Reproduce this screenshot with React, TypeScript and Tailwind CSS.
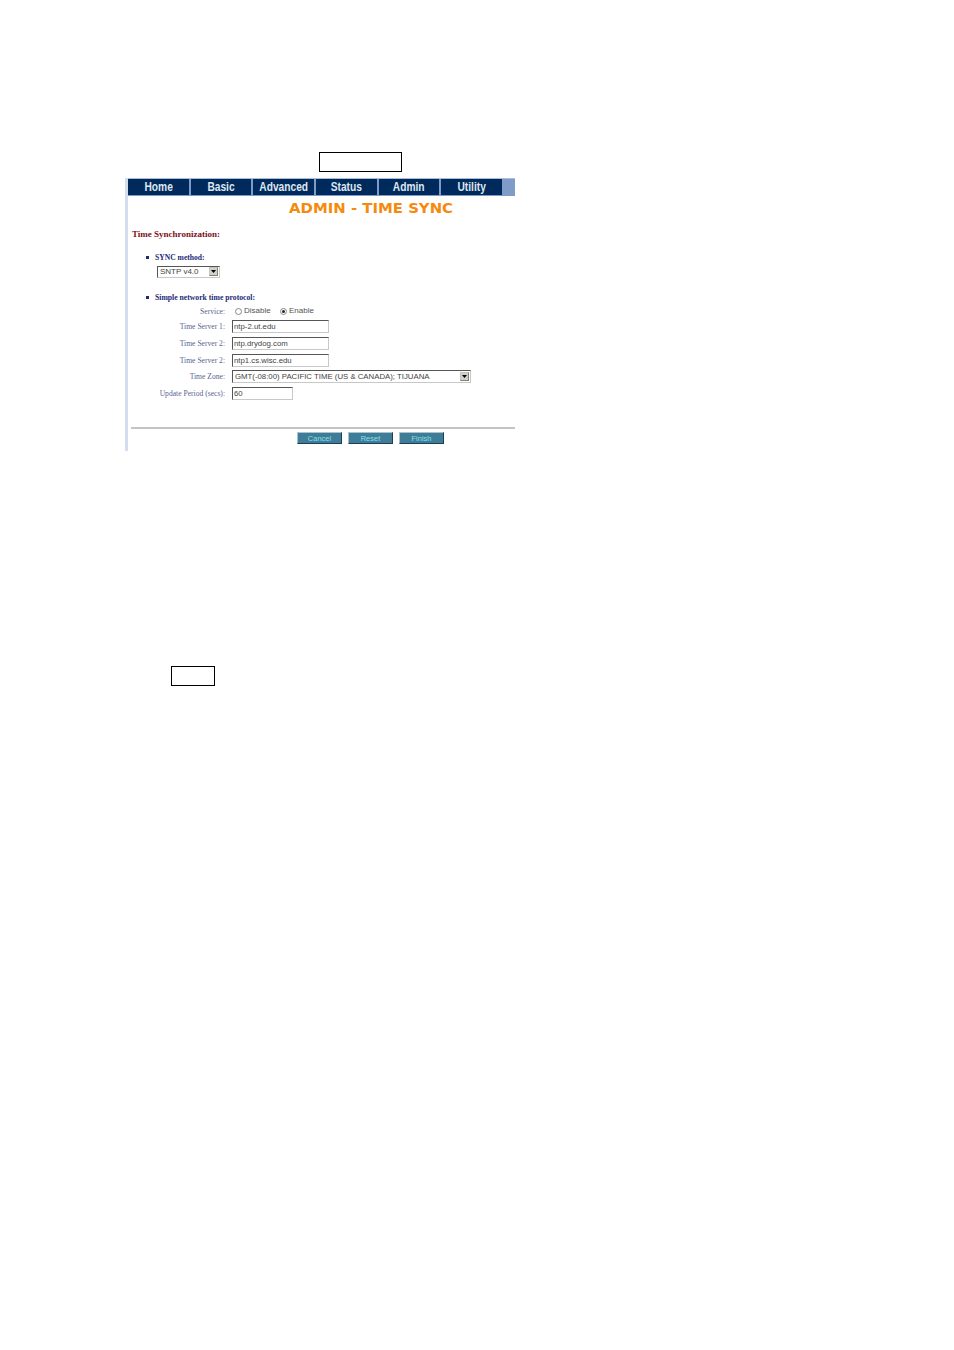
import React from 'react';

const navItems = ['Home', 'Basic', 'Advanced', 'Status', 'Admin', 'Utility'];

const serverRows = [
  { label: 'Time Server 1:', value: 'ntp-2.ut.edu' },
  { label: 'Time Server 2:', value: 'ntp.drydog.com' },
  { label: 'Time Server 2:', value: 'ntp1.cs.wisc.edu' },
];

const Label = ({ children }: { children: React.ReactNode }) => (
  <span className="w-[97px] text-right font-['Liberation_Serif',serif] text-[7.6px] leading-none text-[#5a6394]">{children}</span>
);

const Arrow = () => (
  <span className="w-[9px] h-[9px] flex items-center justify-center bg-[#d4d0c8] border border-[#c4c4c4] border-b-[#808080] border-r-[#808080]">
    <svg width="5" height="3" viewBox="0 0 5 3"><path d="M0 0h5L2.5 3z" fill="#000" /></svg>
  </span>
);

const Radio = ({ on }: { on?: boolean }) => (
  <span className="w-[7px] h-[7px] rounded-full border border-[#888] bg-white flex items-center justify-center">
    {on && <span className="w-[3px] h-[3px] rounded-full bg-[#222]" />}
  </span>
);

const Field = ({ w, children }: { w: string; children: React.ReactNode }) => (
  <div className={`${w} h-[13px] flex items-center pl-[1px] bg-white border border-[#c8c8c8] border-t-[#555] border-l-[#555] font-['Liberation_Sans',sans-serif] text-[7.8px] text-[#444] leading-none`}>
    {children}
  </div>
);

const ActionButton = ({ children }: { children: React.ReactNode }) => (
  <button className="w-[45px] h-[12px] flex items-center justify-center bg-[#3f7c97] border border-[#a8c4d0] border-b-[#1d3f55] border-r-[#1d3f55] font-['Liberation_Sans',sans-serif] text-[7.5px] leading-none text-[#7fe0f0]">
    {children}
  </button>
);

export default function App() {
  return (
    <div className="w-[954px] h-[1350px] bg-white pt-[152px] overflow-hidden">
      <div className="ml-[319px] w-[83px] h-[20px] border border-black" />

      <div className="ml-[125px] mt-[6px] w-[390px] h-[273px] flex">
        <div className="w-[3px] bg-[#d3deec]" />
        <div className="flex-1 flex flex-col">
          <div className="h-[18px] flex gap-[2px] bg-[#7f9cc9] border-t border-[#a9bcd9] pr-[13px]">
            {navItems.map((item) => (
              <div key={item} className="flex-1 h-[16px] flex items-center justify-center bg-[#002a5c] font-['Liberation_Sans',sans-serif] text-[12px] font-bold text-[#dfe7f0] leading-none">
                <span className="inline-block scale-x-[0.85]">{item}</span>
              </div>
            ))}
          </div>

          <div className="h-[24px] pl-[161px] flex items-center font-['DejaVu_Sans',sans-serif] text-[14.9px] font-bold text-[#f58a0c] leading-none whitespace-nowrap">
            ADMIN - TIME SYNC
          </div>

          <div className="mt-[10px] pl-[4px] font-['Liberation_Serif',serif] text-[9px] font-bold text-[#7a1020] leading-none">
            Time Synchronization:
          </div>

          <div className="mt-[15px] pl-[18px] flex items-center gap-[6px] font-['Liberation_Serif',serif] text-[7.6px] font-bold text-[#1e2a78] leading-none">
            <span className="w-[3px] h-[3px] bg-[#1e2a78]" />
            SYNC method:
          </div>
          <div className="mt-[4px] ml-[29px] w-[63px] h-[12px] flex items-center justify-between pl-[2px] pr-[1px] border border-[#c8c8c8] border-t-[#555] border-l-[#555] font-['Liberation_Sans',sans-serif] text-[8px] text-[#444] leading-none">
            SNTP v4.0
            <Arrow />
          </div>

          <div className="mt-[16px] pl-[18px] flex items-center gap-[6px] font-['Liberation_Serif',serif] text-[7.7px] font-bold text-[#1e2a78] leading-none">
            <span className="w-[3px] h-[3px] bg-[#1e2a78]" />
            Simple network time protocol:
          </div>

          <div className="mt-[6px] flex items-center">
            <Label>Service:</Label>
            <div className="ml-[10px] flex items-center font-['Liberation_Sans',sans-serif] text-[8px] text-[#555] leading-none">
              <span className="flex items-center gap-[2px] w-[45px]"><Radio />Disable</span>
              <span className="flex items-center gap-[2px]"><Radio on />Enable</span>
            </div>
          </div>

          <div className="mt-[5px] flex flex-col gap-[4px]">
            {serverRows.map((row, i) => (
              <div key={i} className="flex items-center gap-[7px]">
                <Label>{row.label}</Label>
                <Field w="w-[97px]">{row.value}</Field>
              </div>
            ))}
          </div>

          <div className="mt-[3px] flex flex-col gap-[4px]">
            <div className="flex items-center gap-[7px]">
              <Label>Time Zone:</Label>
              <div className="w-[239px] h-[13px] flex items-center justify-between pl-[2px] pr-[1px] border border-[#c8c8c8] border-t-[#555] border-l-[#555] font-['Liberation_Sans',sans-serif] text-[7.8px] text-[#444] leading-none whitespace-nowrap">
                GMT(-08:00) PACIFIC TIME (US &amp; CANADA); TIJUANA
                <Arrow />
              </div>
            </div>
            <div className="flex items-center gap-[7px]">
              <Label>Update Period (secs):</Label>
              <Field w="w-[61px]">60</Field>
            </div>
          </div>

          <div className="mt-[27px] ml-[3px] h-[2px] bg-[#c4c4c4]" />

          <div className="mt-[3px] pl-[169px] flex gap-[6px]">
            <ActionButton>Cancel</ActionButton>
            <ActionButton>Reset</ActionButton>
            <ActionButton>Finish</ActionButton>
          </div>
        </div>
      </div>

      <div className="ml-[171px] mt-[215px] w-[44px] h-[20px] border border-black" />
    </div>
  );
}
